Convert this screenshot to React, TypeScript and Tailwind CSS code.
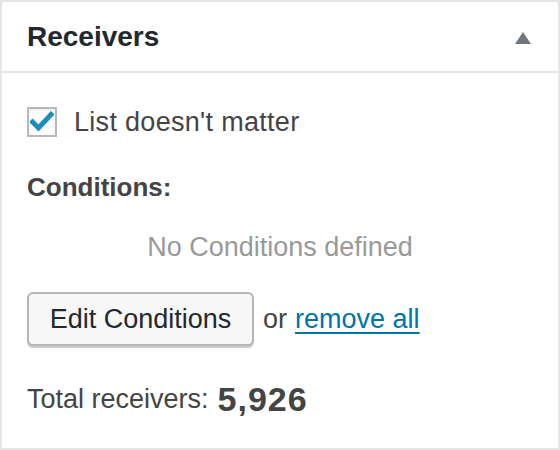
const font = { fontFamily: '"Liberation Sans", Arial, sans-serif' }

const App = () => {
  return (
    <div
      className="w-[560px] h-[450px] bg-white border-2 border-[#e5e5e5] flex flex-col"
      style={font}
    >
      {/* Header */}
      <div className="h-[71px] shrink-0 border-b-2 border-[#e5e5e5] flex items-center justify-between pl-[25px] pr-[27px]">
        <h2 className="text-[28px] font-bold text-[#23282d] leading-none mt-[1px]">Receivers</h2>
        <svg width="16" height="12" viewBox="0 0 16 12" className="mt-[3px]">
          <polygon points="8,0 16,12 0,12" fill="#72777c" />
        </svg>
      </div>

      {/* Body */}
      <div className="flex flex-col pl-[25px] pr-[25px]">
        <label className="mt-[34px] flex items-center h-[30px]">
          <span className="w-[30px] h-[30px] border-2 border-[#b4b9be] shadow-[inset_0_1px_3px_rgba(0,0,0,0.1)] flex items-center justify-center bg-white">
            <svg width="24" height="22" viewBox="0 0 24 22">
              <path d="M2.5 11 L8.5 17 L21 3.5" fill="none" stroke="#1e8cbe" strokeWidth="5" strokeLinecap="square" />
            </svg>
          </span>
          <span className="ml-[17px] text-[27px] text-[#444] leading-none tracking-[0.3px]">List doesn't matter</span>
        </label>

        <div className="mt-[32px] h-[36px] flex items-center text-[26px] font-bold text-[#444]">Conditions:</div>

        <div className="mt-[24px] h-[36px] flex items-center justify-center text-[27px] text-[#999]">
          No Conditions defined
        </div>

        <div className="mt-[27px] flex items-center">
          <button className="w-[227px] h-[54px] border-2 border-[#b5b5b5] rounded-[6px] bg-[#f7f7f7] shadow-[0_2px_0_#ccc] text-[27px] text-[#23282d] flex items-center justify-center">
            Edit Conditions
          </button>
          <span className="ml-[9px] text-[27px] text-[#444]">or</span>
          <a href="#" className="ml-[8px] text-[27px] text-[#0073aa] underline underline-offset-[4px] decoration-[2px]">
            remove all
          </a>
        </div>

        <div className="mt-[33px] h-[40px] flex items-center text-[#444]">
          <span className="text-[27px]">Total receivers:</span>
          <span className="ml-[9px] text-[34px] font-bold tracking-[1px]">5,926</span>
        </div>
      </div>
    </div>
  )
}

export default App
